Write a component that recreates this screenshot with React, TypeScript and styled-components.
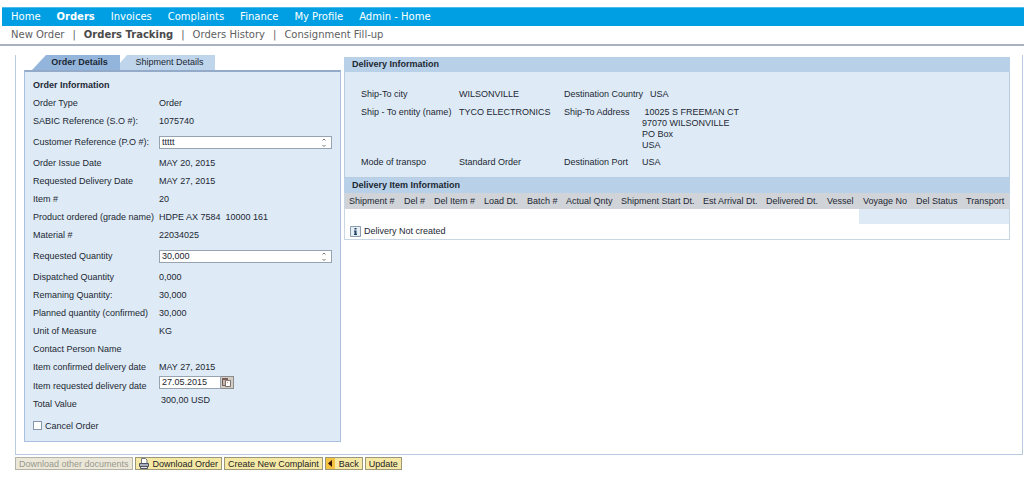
import React from "react";
import styled, { createGlobalStyle } from "styled-components";

const GlobalStyle = createGlobalStyle`
  * { box-sizing: border-box; }
  body {
    margin: 0;
    background: #fff;
    color: #1c2733;
    font: 9px/10px "Liberation Sans", Arial, sans-serif;
  }
  input, button, textarea { font: inherit; color: inherit; border-radius: 0; margin: 0; }
`;

const Page = styled.div`
  padding-top: 7px;
`;

const MainNav = styled.nav`
  display: flex;
  align-items: center;
  gap: 16px;
  height: 19px;
  margin-left: 2px;
  padding-left: 9px;
  background: #009fe3;
  border-top: 1px solid #4dbcec;
  font-family: "DejaVu Sans", Verdana, sans-serif;
  font-size: 10px;
`;

const MainLink = styled.a<{ $current?: boolean }>`
  color: #fff;
  text-decoration: none;
  white-space: nowrap;
  font-weight: ${(p) => (p.$current ? "bold" : "normal")};
`;

const SubNav = styled.nav`
  display: flex;
  align-items: center;
  height: 20px;
  padding-left: 11px;
  border-bottom: 2px solid #a9b2c0;
  font-family: "DejaVu Sans", Verdana, sans-serif;
  font-size: 10px;
`;

const SubLink = styled.a<{ $current?: boolean }>`
  color: ${(p) => (p.$current ? "#4a4a4a" : "#606060")};
  text-decoration: none;
  white-space: nowrap;
  font-weight: ${(p) => (p.$current ? "bold" : "normal")};
`;

const Separator = styled.span`
  margin: 0 8px;
  color: #606060;
`;

const Frame = styled.main`
  display: flex;
  align-items: flex-start;
  gap: 3px;
  margin: 9px 1px 0 15px;
  padding: 0 12px 12px 8px;
  border: 1px solid #b9cbdf;
  border-top: 0;
`;

const OrderColumn = styled.section`
  flex: 0 0 316px;
`;

const Tabs = styled.div`
  display: flex;
  height: 15px;
  padding-left: 8px;
`;

const Tab = styled.button<{ $active?: boolean }>`
  width: ${(p) => (p.$active ? 88 : 95)}px;
  padding: 0 0 2px ${(p) => (p.$active ? 7 : 4)}px;
  border: 0;
  background: ${(p) => (p.$active ? "#93b5dc" : "#bfd5eb")};
  font-weight: ${(p) => (p.$active ? "bold" : "normal")};
  text-align: center;
  clip-path: ${(p) =>
    p.$active
      ? "polygon(14px 0, 100% 0, 100% 100%, 0 100%)"
      : "polygon(7px 0, 100% 0, 100% 100%, 0 100%, 0 8px)"};
`;

const OrderPanel = styled.form`
  padding: 8px 8px 9px;
  border: 1px solid #a9c1df;
  border-top: 2px solid #93abc9;
  background: #deebf6;
`;

const PanelTitle = styled.h2`
  margin: 0 0 3px;
  font-size: 9px;
  line-height: 11px;
`;

const Row = styled.div<{ $kind?: "field" | "top" }>`
  display: grid;
  grid-template-columns: 126px 1fr;
  align-items: center;
  height: ${(p) => (p.$kind === "field" ? 24 : p.$kind === "top" ? 19 : 18)}px;
  white-space: pre;
`;

const RaisedValue = styled.span`
  align-self: start;
  padding-left: 2px;
`;

const FieldBox = styled.div<{ $width: number }>`
  display: flex;
  align-items: center;
  width: ${(p) => p.$width}px;
  height: 13px;
  border: 1px solid #97a3b0;
  background: #fff;
`;

const DateGroup = styled.div`
  display: flex;
  align-self: start;
`;

const FieldInput = styled.input`
  flex: 1;
  min-width: 0;
  height: 11px;
  padding: 0 2px 1px;
  border: 0;
  outline: 0;
  background: transparent;
`;

const CalendarButton = styled.button`
  display: flex;
  width: 13px;
  height: 13px;
  padding: 0;
  border: 1px solid #8d8d8d;
  border-left: 0;
  background: #d2cec6;
`;

const CheckRow = styled.label`
  display: flex;
  align-items: center;
  gap: 3px;
  margin-top: 6px;
  height: 13px;
`;

const Check = styled.input`
  appearance: none;
  width: 9px;
  height: 9px;
  border: 1px solid #8796a8;
  background: #fff;
  &:checked { background: #4b78ad; }
`;

const DeliveryColumn = styled.section`
  flex: 1;
  min-width: 0;
  margin-top: 2px;
`;

const Band = styled.h2`
  margin: 0;
  padding-left: 8px;
  background: #b9d1e8;
  font-size: 9px;
  line-height: 15px;
`;

const DeliveryDetails = styled.dl`
  display: grid;
  grid-template-columns: 98px 105px 78px 1fr;
  grid-template-rows: 18px 50px 11px;
  align-items: start;
  margin: 0;
  padding: 17px 0 9px 16px;
  border: 1px solid #b9cde2;
  border-top: 0;
  background: #deebf6;
  line-height: 11px;
`;

const Term = styled.dt`
  white-space: nowrap;
`;

const Detail = styled.dd<{ $indent?: boolean }>`
  margin: 0;
  padding-left: ${(p) => (p.$indent ? 8 : 0)}px;
  white-space: pre;
`;

const Items = styled.div`
  border: 1px solid #c9d6e4;
  border-top: 0;
`;

const ItemTable = styled.table`
  width: 100%;
  table-layout: fixed;
  border-collapse: collapse;
`;

const HeadCell = styled.th<{ $width: number }>`
  width: ${(p) => p.$width}px;
  height: 16px;
  padding: 0 0 0 4px;
  background: #d0d3d8;
  font-weight: normal;
  text-align: left;
  white-space: nowrap;
`;

const Cell = styled.td<{ $shaded: boolean }>`
  height: 15px;
  padding: 0;
  background: ${(p) => (p.$shaded ? "#deebf6" : "#fff")};
`;

const Message = styled.p`
  display: flex;
  align-items: center;
  gap: 3px;
  height: 15px;
  margin: 0;
  padding: 0 0 1px 5px;
`;

const Actions = styled.div`
  display: flex;
  gap: 2px;
  padding: 2px 0 0 15px;
`;

const Action = styled.button<{ $flush?: boolean }>`
  display: flex;
  align-items: center;
  gap: 4px;
  height: 13px;
  padding: 0 3px 0 ${(p) => (p.$flush ? 0 : 3)}px;
  border: 1px solid #9c9777;
  background: #f6e9a6;
  color: #222;
  white-space: nowrap;
  &:disabled {
    border-color: #b5b3a6;
    background: #ebe8da;
    color: #99978c;
  }
`;

const StepArrows = () => (
  <svg width="12" height="11" viewBox="0 0 12 11" fill="none" stroke="#777" strokeWidth="1">
    <path d="M3.5 3.5 5 2l1.500 1.500M3.500 8 5 9.500 6.500 8" />
  </svg>
);

const CalendarIcon = () => (
  <svg width="12" height="11" viewBox="0 0 12 11">
    <path d="M1.500 1.500h5v7h-5z" fill="#c9b9ac" stroke="#6d5c58" />
    <path d="M1 1h6v2H1z" fill="#7a5f5b" />
    <path d="M4.500 3.500h5v6h-5z" fill="#fff" stroke="#77706c" />
    <path d="M4 3h6v1H4z" fill="#857b78" />
    <path d="M6 5h1v1H6z" fill="#e08a3c" />
  </svg>
);

const InfoIcon = () => (
  <svg width="11" height="11" viewBox="0 0 11 11">
    <path d="M.5.5h10v10H.5z" fill="#e6eef5" stroke="#8b9dad" />
    <path d="M4.500 2h2v1.500h-2zM4 4.500h2.500V8H7v1H4V8h.5V5.500H4z" fill="#1d3f60" />
  </svg>
);

const PrinterIcon = () => (
  <svg width="10" height="11" viewBox="0 0 10 11">
    <path d="M2.500 5V.5h4L8 2v3" fill="#fff" stroke="#6f7480" />
    <path d="M.5 5.500h9v3h-9z" fill="#a7adb8" stroke="#4d5360" />
    <path d="M1.500 8.500h7v2h-7z" fill="#e8e8e8" stroke="#4d5360" />
  </svg>
);

const BackIcon = () => (
  <svg width="9" height="11" viewBox="0 0 9 11">
    <path d="M0 0h9v11H0z" fill="#f5c342" />
    <path d="M6 2v7L2 5.500z" fill="#3a1408" />
  </svg>
);

const mainLinks = ["Home", "Orders", "Invoices", "Complaints", "Finance", "My Profile", "Admin - Home"];
const subLinks = ["New Order", "Orders Tracking", "Orders History", "Consignment Fill-up"];

type OrderRow = { label: string; value: string; field?: string };
const orderRows: OrderRow[] = [
  { label: "Order Type", value: "Order" },
  { label: "SABIC Reference (S.O #):", value: "1075740" },
  { label: "Customer Reference (P.O #):", value: "ttttt", field: "customer-reference" },
  { label: "Order Issue Date", value: "MAY 20, 2015" },
  { label: "Requested Delivery Date", value: "MAY 27, 2015" },
  { label: "Item #", value: "20" },
  { label: "Product ordered (grade name)", value: "HDPE AX 7584  10000 161" },
  { label: "Material #", value: "22034025" },
  { label: "Requested Quantity", value: "30,000", field: "requested-quantity" },
  { label: "Dispatched Quantity", value: "0,000" },
  { label: "Remaning Quantity:", value: "30,000" },
  { label: "Planned quantity (confirmed)", value: "30,000" },
  { label: "Unit of Measure", value: "KG" },
  { label: "Contact Person Name", value: "" },
  { label: "Item confirmed delivery date", value: "MAY 27, 2015" },
];

const columns: [string, number][] = [
  ["Shipment #", 55],
  ["Del #", 30],
  ["Del Item #", 50],
  ["Load Dt.", 43],
  ["Batch #", 39],
  ["Actual Qnty", 55],
  ["Shipment Start Dt.", 82],
  ["Est Arrival Dt.", 63],
  ["Delivered Dt.", 61],
  ["Vessel", 36],
  ["Voyage No", 53],
  ["Del Status", 50],
  ["Transport", 47],
];

export default function App() {
  return (
    <Page>
      <GlobalStyle />
      <MainNav aria-label="Main">
        {mainLinks.map((name) => (
          <MainLink key={name} href="#" $current={name === "Orders"}>{name}</MainLink>
        ))}
      </MainNav>
      <SubNav aria-label="Orders">
        {subLinks.map((name, index) => (
          <React.Fragment key={name}>
            {index > 0 && <Separator>|</Separator>}
            <SubLink href="#" $current={name === "Orders Tracking"}>{name}</SubLink>
          </React.Fragment>
        ))}
      </SubNav>

      <Frame>
        <OrderColumn>
          <Tabs role="tablist">
            <Tab role="tab" aria-selected="true" $active>Order Details</Tab>
            <Tab role="tab" aria-selected="false">Shipment Details</Tab>
          </Tabs>
          <OrderPanel>
            <PanelTitle>Order Information</PanelTitle>
            {orderRows.map(({ label, value, field }) =>
              field ? (
                <Row key={label} $kind="field">
                  <label htmlFor={field}>{label}</label>
                  <FieldBox $width={173}>
                    <FieldInput id={field} defaultValue={value} />
                    <StepArrows />
                  </FieldBox>
                </Row>
              ) : (
                <Row key={label}>
                  <span>{label}</span>
                  <span>{value}</span>
                </Row>
              )
            )}
            <Row $kind="top">
              <label htmlFor="requested-date">Item requested delivery date</label>
              <DateGroup>
                <FieldBox $width={62}>
                  <FieldInput id="requested-date" defaultValue="27.05.2015" />
                </FieldBox>
                <CalendarButton type="button" aria-label="Choose date">
                  <CalendarIcon />
                </CalendarButton>
              </DateGroup>
            </Row>
            <Row>
              <span>Total Value</span>
              <RaisedValue>300,00 USD</RaisedValue>
            </Row>
            <CheckRow>
              <Check type="checkbox" />
              Cancel Order
            </CheckRow>
          </OrderPanel>
        </OrderColumn>

        <DeliveryColumn>
          <Band>Delivery Information</Band>
          <DeliveryDetails>
            <Term>Ship-To city</Term>
            <Detail>WILSONVILLE</Detail>
            <Term>Destination Country</Term>
            <Detail $indent>USA</Detail>
            <Term>Ship - To entity (name)</Term>
            <Detail>TYCO ELECTRONICS</Detail>
            <Term>Ship-To Address</Term>
            <Detail>{" 10025 S FREEMAN CT\n97070 WILSONVILLE\nPO Box\nUSA"}</Detail>
            <Term>Mode of transpo</Term>
            <Detail>Standard Order</Detail>
            <Term>Destination Port</Term>
            <Detail>USA</Detail>
          </DeliveryDetails>
          <Band>Delivery Item Information</Band>
          <Items>
            <ItemTable>
              <thead>
                <tr>
                  {columns.map(([name, width]) => (
                    <HeadCell key={name} $width={width}>{name}</HeadCell>
                  ))}
                </tr>
              </thead>
              <tbody>
                <tr>
                  {columns.map(([name], index) => (
                    <Cell key={name} $shaded={index >= 10} />
                  ))}
                </tr>
              </tbody>
            </ItemTable>
            <Message>
              <InfoIcon />
              Delivery Not created
            </Message>
          </Items>
        </DeliveryColumn>
      </Frame>

      <Actions>
        <Action disabled>Download other documents</Action>
        <Action><PrinterIcon />Download Order</Action>
        <Action>Create New Complaint</Action>
        <Action $flush><BackIcon />Back</Action>
        <Action>Update</Action>
      </Actions>
    </Page>
  );
}
